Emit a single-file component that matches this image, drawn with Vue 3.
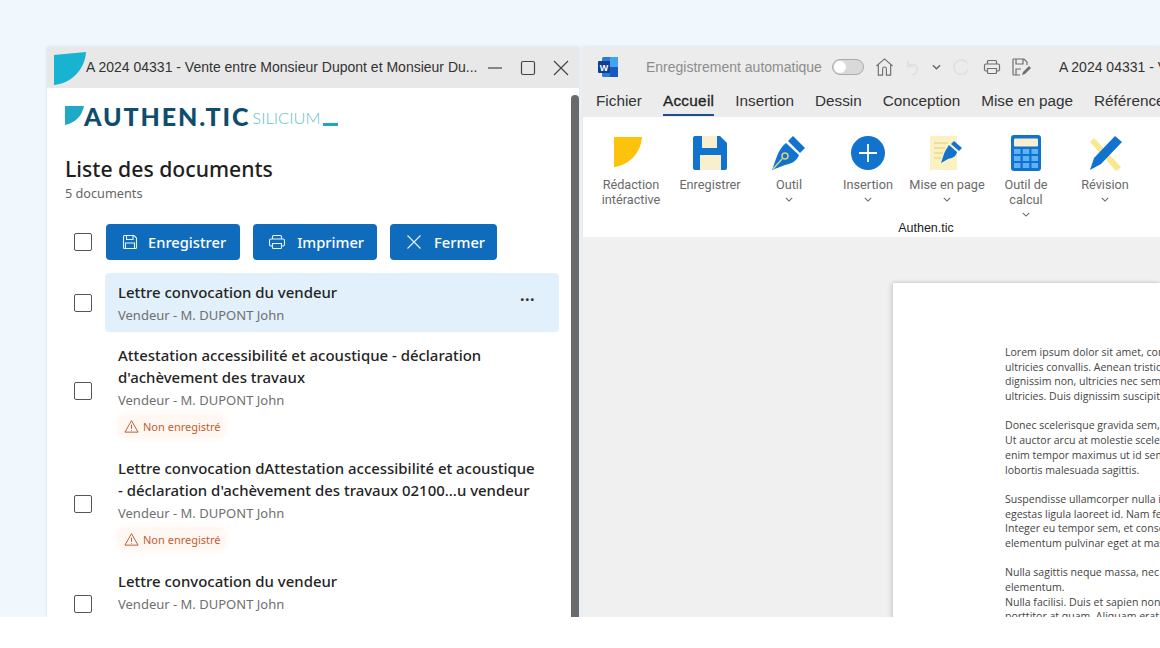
<script setup>
const docs = [
  { id: 1, title: ['Lettre convocation du vendeur'], active: true },
  { id: 2, title: ['Attestation accessibilité et acoustique - déclaration', "d'achèvement des travaux"], warn: true },
  { id: 3, title: ['Lettre convocation dAttestation accessibilité et acoustique', "- déclaration d'achèvement des travaux 02100...u vendeur"], warn: true },
  { id: 4, title: ['Lettre convocation du vendeur'], tall: true }
]
const tabs = ['Fichier', 'Accueil', 'Insertion', 'Dessin', 'Conception', 'Mise en page', 'Références']
const tools = [
  { icon: 'leaf', label: ['Rédaction', 'intéractive'] },
  { icon: 'save', label: ['Enregistrer'] },
  { icon: 'pen', label: ['Outil'], more: true },
  { icon: 'plus', label: ['Insertion'], more: true },
  { icon: 'page', label: ['Mise en page'], more: true },
  { icon: 'calc', label: ['Outil de', 'calcul'], more: true },
  { icon: 'review', label: ['Révision'], more: true }
]
const lines = [
  'Lorem ipsum dolor sit amet, consectetur adipiscing elit. Sed',
  'ultricies convallis. Aenean tristique lectus vitae nisl',
  'dignissim non, ultricies nec semper quis nulla',
  'ultricies. Duis dignissim suscipit nibh sed',
  '',
  'Donec scelerisque gravida sem, sed tincidunt',
  'Ut auctor arcu at molestie scelerisque nunc',
  'enim tempor maximus ut id sem vitae',
  'lobortis malesuada sagittis.',
  '',
  'Suspendisse ullamcorper nulla in lorem',
  'egestas ligula laoreet id. Nam feugiat',
  'Integer eu tempor sem, et consequat',
  'elementum pulvinar eget at massa',
  '',
  'Nulla sagittis neque massa, nec lacinia',
  'elementum.',
  'Nulla facilisi. Duis et sapien non',
  'porttitor at quam. Aliquam erat volutpat.'
]
</script>

<template>
  <div class="stage">
    <section class="pane">
      <header class="titlebar">
        <svg class="app-mark" viewBox="0 0 32 33"><path d="M0 3 32 0C31 17 18 31 0 33Z" fill="#17b3d0" /></svg>
        <span class="win-title">A 2024 04331 - Vente entre Monsieur Dupont et Monsieur Du...</span>
        <div class="win-controls">
          <svg viewBox="0 0 16 16"><path d="M1 8h14" /></svg>
          <svg viewBox="0 0 16 16"><rect x="1.500" y="1.500" width="13" height="13" rx="1.500" /></svg>
          <svg viewBox="0 0 16 16"><path d="m1 1 14 14m0-14-14 14" /></svg>
        </div>
      </header>
      <div class="pane-body">
        <div class="scrollbar"></div>
        <div class="logo">
          <svg viewBox="0 0 19 19"><path d="M0 0H19C17 10 10 17 0 19Z" fill="#1fa9c4" /></svg>
          <span class="logo-main">AUTHEN.TIC</span>
          <span class="logo-sub">SILICIUM</span>
          <span class="logo-bar"></span>
        </div>
        <h1>Liste des documents</h1>
        <p class="count">5 documents</p>
        <div class="toolbar">
          <span class="check"></span>
          <button class="btn">
            <svg viewBox="0 0 18 18"><path d="M2.500 3.500a1 1 0 0 1 1-1h9.500l2.500 2.500v9.500a1 1 0 0 1-1 1h-11a1 1 0 0 1-1-1Z M5.500 2.500v4h6.500v-4 M4.500 15.500v-5.500h9v5.500" /></svg>
            Enregistrer
          </button>
          <button class="btn btn-print">
            <svg viewBox="0 0 18 18"><path d="M4.500 6V3.500a1 1 0 0 1 1-1h7a1 1 0 0 1 1 1V6 M4.500 13H3a1.500 1.500 0 0 1-1.500-1.500v-4A1.500 1.500 0 0 1 3 6h12a1.500 1.500 0 0 1 1.500 1.500v4A1.500 1.500 0 0 1 15 13h-1.500 M4.500 10.500h9v4a1 1 0 0 1-1 1h-7a1 1 0 0 1-1-1Z" /></svg>
            Imprimer
          </button>
          <button class="btn btn-close">
            <svg viewBox="0 0 18 18"><path d="m2.500 2.500 13 13m0-13-13 13" /></svg>
            Fermer
          </button>
        </div>
        <ul class="docs">
          <li v-for="d in docs" :key="d.id" class="doc" :class="{ 'doc-tall': d.tall }">
            <span class="check"></span>
            <div class="doc-card" :class="{ active: d.active }">
              <div class="doc-title" v-for="t in d.title" :key="t">{{ t }}</div>
              <div class="doc-sub">Vendeur - M. DUPONT John</div>
              <div v-if="d.warn" class="warn">
                <svg viewBox="0 0 16 16"><path d="M8 1.800 15 14H1Z M8 6v4.500 M8 11.800v.7" /></svg>
                Non enregistré
              </div>
              <span v-if="d.active" class="dots">...</span>
            </div>
          </li>
        </ul>
      </div>
    </section>

    <section class="word">
      <header class="word-top">
        <svg class="word-logo" viewBox="0 0 20 20">
          <rect x="4" y="0" width="16" height="20" rx="1.500" fill="#2b7cd3" />
          <rect x="12" y="0" width="8" height="10" fill="#41a5ee" />
          <rect x="12" y="10" width="8" height="10" fill="#185abd" />
          <rect x="0" y="4" width="12" height="12" rx="1" fill="#103f91" />
          <text x="6" y="13.500" text-anchor="middle" class="word-w">W</text>
        </svg>
        <span class="auto-save">Enregistrement automatique</span>
        <span class="toggle"><i></i></span>
        <svg class="qa home" viewBox="0 0 20 20"><path d="M1.500 9 10 1.500 18.500 9 M3.500 7.500V18.500H8V12a2 2 0 0 1 4 0v6.500h4.500V7.500" /></svg>
        <svg class="qa faint undo" viewBox="0 0 16 20"><path d="M3 3v6h6 M3 9c3-4 10-3 10 3 0 3-2 5-5 6" /></svg>
        <svg class="qa chev" viewBox="0 0 10 6"><path d="m1 1 4 4 4-4" /></svg>
        <svg class="qa faint redo" viewBox="0 0 20 20"><path d="M17 6A8 8 0 1 0 18 12" /></svg>
        <svg class="qa print" viewBox="0 0 18 18"><path d="M4.500 6V3.500a1 1 0 0 1 1-1h7a1 1 0 0 1 1 1V6 M4.500 13H3a1.500 1.500 0 0 1-1.500-1.500v-4A1.500 1.500 0 0 1 3 6h12a1.500 1.500 0 0 1 1.500 1.500v4A1.500 1.500 0 0 1 15 13h-1.500 M4.500 10.500h9v4a1 1 0 0 1-1 1h-7a1 1 0 0 1-1-1Z" /></svg>
        <svg class="qa savepen" viewBox="0 0 20 18"><path d="M1 2a1 1 0 0 1 1-1h10l3 3v3 M1 2v14a1 1 0 0 0 1 1h6 M4 1v5h7V1 M4 17v-6h5" /><path d="m10 17 1-3 6-6 2 2-6 6Z" class="savepen-fill" /></svg>
        <span class="doc-name">A 2024 04331 - Vente entre Monsieur</span>
      </header>
      <nav class="tabs">
        <span v-for="t in tabs" :key="t" class="tab" :class="{ current: t === 'Accueil' }">{{ t }}</span>
      </nav>
      <div class="ribbon">
        <div class="tools">
          <div v-for="t in tools" :key="t.icon" class="tool">
            <svg v-if="t.icon === 'leaf'" viewBox="0 0 36 36"><path d="M1 2H29C28 17 17 30 1 32Z" fill="#fcc30c" /></svg>
            <svg v-else-if="t.icon === 'save'" viewBox="0 0 36 36">
              <path d="M1 3a2 2 0 0 1 2-2h25l7 7v25a2 2 0 0 1-2 2H3a2 2 0 0 1-2-2Z" fill="#1273cf" />
              <rect x="10" y="1" width="15" height="12" fill="#f7efcd" />
              <rect x="8" y="20" width="21" height="15" fill="#f7efcd" />
            </svg>
            <svg v-else-if="t.icon === 'pen'" viewBox="0 0 36 36">
              <path d="m22 1 12 12-5 5L17 6Z" fill="#1273cf" />
              <path d="M15 8 28 20c-2 6-8 9-14 10L1 35 6 21C8 16 11 11 15 8Z" fill="#1273cf" />
              <path d="M2 34 11 24" stroke="#d8d37a" stroke-width="1.500" />
              <circle cx="14" cy="21" r="3" fill="none" stroke="#d8d37a" stroke-width="1.500" />
            </svg>
            <svg v-else-if="t.icon === 'plus'" viewBox="0 0 36 36">
              <circle cx="18" cy="18" r="17" fill="#1273cf" />
              <path d="M18 9v18M9 18h18" stroke="#fff" stroke-width="1.800" />
            </svg>
            <svg v-else-if="t.icon === 'page'" viewBox="0 0 36 36">
              <rect x="1" y="1" width="27" height="34" fill="#fbf2c4" />
              <path d="M5 8h14M5 13h11M5 18h9M5 23h7" stroke="#ead98d" stroke-width="1.500" />
              <path d="m25 6 8 7-3 3-8-7Z" fill="#1273cf" />
              <path d="M20 10 28 17c-1 5-5 6-9 7l-7 4 3-9c1-3 3-6 5-9Z" fill="#1273cf" />
            </svg>
            <svg v-else-if="t.icon === 'calc'" viewBox="0 0 36 36">
              <rect x="3" y="0" width="30" height="36" rx="3" fill="#1273cf" />
              <rect x="6" y="3.500" width="24" height="8" rx="1" fill="#f7efcd" />
              <g fill="#5db3f5">
                <rect x="6" y="14" width="6.500" height="5" /><rect x="14.750" y="14" width="6.500" height="5" /><rect x="23.500" y="14" width="6.500" height="5" />
                <rect x="6" y="21" width="6.500" height="5" /><rect x="14.750" y="21" width="6.500" height="5" /><rect x="23.500" y="21" width="6.500" height="5" />
                <rect x="6" y="28" width="6.500" height="5" /><rect x="14.750" y="28" width="6.500" height="5" /><rect x="23.500" y="28" width="6.500" height="5" />
              </g>
            </svg>
            <svg v-else viewBox="0 0 36 36">
              <path d="M3 7 7 3 34 32 29 36Z" fill="#f9e88e" />
              <path d="M28 1 35 7 14 29 3 35 7 23Z" fill="#1273cf" />
            </svg>
            <span v-for="l in t.label" :key="l" class="tool-label">{{ l }}</span>
            <svg v-if="t.more" class="more" viewBox="0 0 10 6"><path d="m1 1 4 4 4-4" /></svg>
          </div>
        </div>
        <div class="group-name">Authen.tic</div>
      </div>
      <div class="canvas">
        <article class="sheet">
          <p v-for="(l, i) in lines" :key="i">{{ l || '\u00a0' }}</p>
        </article>
      </div>
    </section>
  </div>
</template>

<style>
html, body { margin: 0; background: #fff; }
</style>

<style scoped>
.stage {
  height: 617px;
  box-sizing: border-box;
  padding: 47px 0 0 47px;
  background: #f0f8fd;
  display: flex;
  gap: 4px;
  overflow: hidden;
  width: 1160px;
}
.pane {
  width: 532px;
  flex: none;
  display: flex;
  flex-direction: column;
  background: #fff;
  box-shadow: 0 0 3px rgba(60, 90, 110, .18);
}
.titlebar {
  height: 41px;
  flex: none;
  background: #e8e8e8;
  display: flex;
  align-items: center;
  padding-left: 7px;
}
.app-mark { width: 32px; height: 33px; flex: none; margin-top: 1px; }
.win-title {
  font: 14px/1 "Liberation Sans", sans-serif;
  color: #333;
  white-space: nowrap;
  padding-bottom: 2px;
}
.win-controls { display: flex; gap: 17px; margin-left: 10px; }
.win-controls svg { width: 16px; height: 16px; fill: none; stroke: #444; stroke-width: 1.200; }
.pane-body { position: relative; flex: 1; padding-left: 18px; font-family: "Noto Sans", sans-serif; }
.scrollbar {
  position: absolute;
  left: 524px;
  top: 7px;
  bottom: 0;
  width: 8px;
  border-radius: 4px 4px 0 0;
  background: #6a6a6a;
}
.logo { display: flex; align-items: flex-end; height: 20px; margin-top: 18px; position: relative; }
.logo svg { width: 19px; height: 19px; flex: none; margin-bottom: 1px; }
.logo-main {
  font: 900 25px/20px Lato, sans-serif;
  color: #0e4d6e;
  letter-spacing: 1.900px;
}
.logo-sub {
  font: 300 16.500px/15px Lato, sans-serif;
  color: #5cc3c6;
  margin-left: 2px;
}
.logo-bar { width: 15px; height: 3px; background: #1fa9b8; margin-left: 2px; }
h1 {
  margin: 28px 0 0;
  font: 500 21.200px/30px "Noto Sans", sans-serif;
  color: #1e1e1e;
}
.count { margin: 0; font: 12.700px/18px "Noto Sans", sans-serif; color: #666; }
.toolbar { display: flex; align-items: center; margin: 22px 0 0 9px; }
.check {
  width: 18px;
  height: 18px;
  box-sizing: border-box;
  flex: none;
  border: 1.500px solid #555;
  border-radius: 2px;
  background: #fff;
}
.btn {
  height: 36px;
  display: flex;
  align-items: center;
  gap: 9px;
  padding: 0 14px 0 15px;
  margin-right: 13px;
  border: 0;
  border-radius: 4px;
  background: #0f6cbd;
  color: #fff;
  font: 500 14.700px/1 "Noto Sans", sans-serif;
}
.btn-print { gap: 11px; padding-right: 13px; }
.btn-close { gap: 11px; padding-right: 12px; }
.toolbar .check { margin-right: 14px; }
.btn svg { width: 18px; height: 18px; fill: none; stroke: #e8f3fc; stroke-width: 1.100; }
.docs { list-style: none; margin: 13px 0 0 9px; padding: 0; display: flex; flex-direction: column; gap: 4px; }
.doc { display: flex; align-items: center; gap: 13px; }
.doc-tall { height: 84px; align-items: center; }
.doc-tall .doc-card { align-self: flex-start; }
.doc-card {
  position: relative;
  width: 454px;
  box-sizing: border-box;
  padding: 8px 13px 6px;
  border-radius: 4px;
}
.doc-card.active { background: #e1f0fb; }
.doc-title { font: 500 14.950px/22px "Noto Sans", sans-serif; color: #242424; white-space: nowrap; }
.doc-sub { margin-top: 1px; font: 13px/22px "Noto Sans", sans-serif; color: #6f6f6f; }
.warn {
  height: 22px;
  margin-top: 4px;
  margin-bottom: 2px;
  width: max-content;
  display: flex;
  align-items: center;
  gap: 4px;
  padding: 0 4px 0 6px;
  border-radius: 8px;
  background: #fef7f2;
  box-shadow: 0 0 6px 2px #fef7f2;
  font: 11px/1 "Noto Sans", sans-serif;
  color: #bf5f33;
}
.warn svg { width: 15px; height: 15px; fill: none; stroke: #b8562b; stroke-width: 1; }
.dots {
  position: absolute;
  right: 24px;
  top: 12px;
  font: 700 16px/20px "Noto Sans", sans-serif;
  color: #333;
  letter-spacing: .5px;
}
.word {
  flex: 1;
  min-width: 0;
  display: flex;
  flex-direction: column;
  box-shadow: 0 0 3px rgba(60, 90, 110, .18);
  background: #f0f0f0;
}
.word-top {
  height: 40px;
  flex: none;
  background: #ececec;
  display: flex;
  align-items: center;
  padding-left: 15px;
  white-space: nowrap;
  overflow: hidden;
}
.word-logo { width: 20px; height: 20px; flex: none; }
.word-w { font: 700 9px "Liberation Sans", sans-serif; fill: #fff; }
.auto-save { font: 14px/1 "Liberation Sans", sans-serif; color: #8c8c8c; margin-left: 28px; }
.toggle {
  width: 32px;
  height: 16px;
  box-sizing: border-box;
  margin-left: 10px;
  flex: none;
  background: #d9d9d9;
  border: 1px solid #aaa;
  border-radius: 8px;
  padding: 1px;
  display: flex;
}
.toggle i { width: 12px; height: 12px; border-radius: 50%; background: #fff; }
.qa { flex: none; fill: none; stroke: #6f6f6f; stroke-width: 1.200; }
.home { width: 19px; height: 20px; margin-left: 11px; }
.undo { width: 15px; height: 19px; margin-left: 11px; }
.faint { stroke: #dedede; stroke-width: 1.500; }
.chev { width: 9px; height: 6px; margin-left: 12px; stroke: #666; stroke-width: 1.500; }
.redo { width: 18px; height: 18px; margin-left: 11px; }
.print { width: 18px; height: 18px; margin-left: 13px; }
.savepen { width: 20px; height: 18px; margin-left: 11px; }
.savepen-fill { fill: #6f6f6f; stroke: none; }
.doc-name { font: 14px/1 "Liberation Sans", sans-serif; color: #333; margin-left: 27px; }
.tabs {
  height: 30px;
  flex: none;
  background: #ececec;
  display: flex;
  gap: 21px;
  padding-left: 13px;
  font: 15.300px/28px "Liberation Sans", sans-serif;
  color: #333;
  white-space: nowrap;
  overflow: hidden;
}
.tab { height: 29px; box-sizing: border-box; }
.tab.current { border-bottom: 2px solid #1f4e8c; color: #222; letter-spacing: .3px; -webkit-text-stroke: .3px #222; }
.ribbon {
  height: 120px;
  flex: none;
  background: #fff;
  padding-left: 8.500px;
  position: relative;
  overflow: hidden;
}
.tools { display: flex; padding-top: 18px; }
.tool { width: 79px; flex: none; display: flex; flex-direction: column; align-items: center; }
.tool > svg:first-child { width: 36px; height: 36px; margin-bottom: 6px; flex: none; }
.tool-label { font: 12.700px/15px Roboto, sans-serif; color: #6a6a6a; white-space: nowrap; }
.more { width: 8px; height: 5px; margin-top: 5px; fill: none; stroke: #666; stroke-width: 1.300; }
.group-name {
  position: absolute;
  left: 8.500px;
  bottom: 1px;
  width: 669px;
  text-align: center;
  font: 12.500px/15px "Liberation Sans", sans-serif;
  color: #222;
}
.canvas { flex: 1; padding: 46px 0 0 310px; overflow: hidden; }
.sheet {
  height: 400px;
  box-sizing: border-box;
  padding: 62px 0 0 112px;
  background: #fff;
  box-shadow: -2px 0 5px rgba(0, 0, 0, .12), 0 -1px 2px rgba(0, 0, 0, .08);
  white-space: nowrap;
  overflow: hidden;
}
.sheet p { margin: 0; font: 10.550px/14.680px "Open Sans", sans-serif; color: #444; }
</style>
